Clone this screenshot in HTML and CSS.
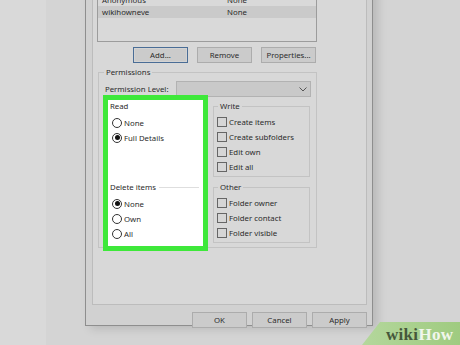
FILE: index.html
```html
<!DOCTYPE html>
<html lang="en">
<head>
    <meta charset="UTF-8">
    <meta name="viewport" content="width=device-width, initial-scale=1.0">
    <title>Permissions</title>
    <link rel="stylesheet" href="styles.css">
</head>
<body>

<div class="screen">
    <div class="strip"></div>

    <div class="dialog">
        <div class="panel">
            <div class="listbox">
                <div class="row"><span class="name">Anonymous</span><span class="level">None</span></div>
                <div class="row selected"><span class="name">wikihowneve</span><span class="level">None</span></div>
            </div>

            <div class="list-buttons">
                <button class="btn focused">Add...</button>
                <button class="btn">Remove</button>
                <button class="btn">Properties...</button>
            </div>

            <div class="group permissions">
                <div class="group-title">Permissions</div>
                <div class="level-row">
                    <span class="level-label">Permission Level:</span>
                    <div class="combo">
                        <svg width="8" height="5" viewBox="0 0 8 5"><polyline points="0.5,0.5 4,4 7.5,0.5" fill="none" stroke="#555" stroke-width="1"/></svg>
                    </div>
                </div>

                <div class="columns">
                    <div class="highlight">
                        <div class="sub-title">Read</div>
                        <div class="option first"><span class="radio"></span>None</div>
                        <div class="option"><span class="radio on"></span>Full Details</div>

                        <div class="sub-title lined">Delete items</div>
                        <div class="option first"><span class="radio on"></span>None</div>
                        <div class="option"><span class="radio"></span>Own</div>
                        <div class="option"><span class="radio"></span>All</div>
                    </div>

                    <div class="right-col">
                        <div class="group small write">
                            <div class="group-title">Write</div>
                            <div class="option"><span class="check"></span>Create items</div>
                            <div class="option"><span class="check"></span>Create subfolders</div>
                            <div class="option"><span class="check"></span>Edit own</div>
                            <div class="option"><span class="check"></span>Edit all</div>
                        </div>
                        <div class="group small other">
                            <div class="group-title">Other</div>
                            <div class="option"><span class="check"></span>Folder owner</div>
                            <div class="option"><span class="check"></span>Folder contact</div>
                            <div class="option"><span class="check"></span>Folder visible</div>
                        </div>
                    </div>
                </div>
            </div>
        </div>

        <div class="footer">
            <button class="btn">OK</button>
            <button class="btn">Cancel</button>
            <button class="btn">Apply</button>
        </div>
    </div>

    <div class="wikihow"><span class="wiki">wiki</span><span class="how">How</span></div>
</div>

</body>
</html>
```

FILE: styles.css
```css
body {
    margin: 0;
    padding: 0;
    font-family: "Noto Sans", "Open Sans", sans-serif;
    font-size: 7.8px;
    color: #2b2b2b;
    background-color: #d4d4d4;
}
.screen {
    position: relative;
    width: 460px;
    height: 345px;
    overflow: hidden;
    display: flex;
    align-items: flex-start;
    background-color: #d4d4d4;
}
.strip {
    width: 46px;
    height: 345px;
    flex-shrink: 0;
    background-color: #d9d9d9;
}
.dialog {
    box-sizing: border-box;
    margin-left: 39px;
    margin-top: -20px;
    width: 288px;
    height: 346px;
    flex-shrink: 0;
    border: 1px solid #8e8e8e;
    background-color: #d1d1d1;
    padding: 0 5px 0 6px;
    box-shadow: 5px 3px 9px rgba(0,0,0,0.13);
}
.panel {
    box-sizing: border-box;
    height: 315px;
    border: 1px solid #bcbcbc;
    border-top: none;
    background-color: #d8d8d8;
    padding: 0 0 0 4px;
}
.listbox {
    box-sizing: border-box;
    margin-top: 9px;
    width: 220px;
    height: 52px;
    border: 1px solid #9c9c9c;
    background-color: #d9d9d9;
    padding-top: 3px;
}
.row {
    display: flex;
    height: 12px;
    line-height: 12px;
    padding-left: 4px;
}
.row.selected {
    background-color: #cacaca;
}
.row .name {
    width: 125px;
}
.btn {
    box-sizing: border-box;
    height: 16px;
    width: 55px;
    padding: 0;
    border: 1px solid #acacac;
    background-color: #cbcbcb;
    font-family: inherit;
    font-size: 7.8px;
    color: #2b2b2b;
}
.btn.focused {
    border-color: #4a6d96;
    box-shadow: inset 0 0 0 1px #d3d3d3;
}
.list-buttons {
    width: 220px;
    display: flex;
    justify-content: flex-end;
    gap: 9px;
    margin-top: 5px;
    padding-right: 1px;
    box-sizing: border-box;
}
.group {
    box-sizing: border-box;
    border: 1px solid #c3c3c3;
}
.group-title {
    width: fit-content;
    height: 12px;
    line-height: 12px;
    margin-top: -7px;
    padding: 0 2px;
    background-color: #d8d8d8;
}
.permissions {
    margin: 9px 0 0 1px;
    width: 219px;
    height: 176px;
    padding: 0 4px;
}
.permissions > .group-title {
    margin-left: 1px;
}
.level-row {
    display: flex;
    align-items: center;
    margin-top: 3px;
    height: 16px;
}
.level-label {
    width: 71px;
    padding-left: 2px;
}
.combo {
    box-sizing: border-box;
    width: 135px;
    height: 16px;
    border: 1px solid #b2b2b2;
    background-color: #c9c9c9;
    display: flex;
    align-items: center;
    justify-content: flex-end;
    padding-right: 3px;
}
.columns {
    display: flex;
    gap: 5px;
    margin-top: -2px;
    position: relative;
}
.highlight {
    box-sizing: border-box;
    width: 105px;
    height: 156px;
    border: 5px solid #3ee83a;
    background-color: #ffffff;
    padding-left: 2px;
}
.sub-title {
    height: 12px;
    line-height: 12px;
}
.sub-title.lined {
    margin-top: 36px;
    display: flex;
    align-items: center;
    gap: 3px;
}
.sub-title.lined::after {
    content: "";
    flex: 1;
    border-top: 1px solid #dedede;
    margin-right: 4px;
}
.option {
    display: flex;
    align-items: center;
    height: 15px;
}
.option.first {
    margin-top: 3px;
}
.highlight .option.first + .option {
    margin-top: 0;
}
.radio {
    box-sizing: border-box;
    width: 10px;
    height: 10px;
    border: 1px solid #333333;
    border-radius: 50%;
    margin: 0 2px 0 2px;
    background-color: #ffffff;
    display: flex;
    align-items: center;
    justify-content: center;
}
.radio.on::after {
    content: "";
    width: 5px;
    height: 5px;
    border-radius: 50%;
    background-color: #111111;
}
.right-col {
    width: 97px;
}
.small {
    padding-left: 3px;
}
.small .group-title {
    margin-left: 1px;
}
.write {
    margin-top: 11px;
    height: 71px;
}
.write .group-title {
    margin-bottom: 2px;
}
.other {
    margin-top: 10px;
    height: 56px;
}
.other .group-title {
    margin-bottom: 2px;
}
.check {
    box-sizing: border-box;
    width: 10px;
    height: 10px;
    border: 1px solid #666666;
    background-color: #d6d6d6;
    margin-right: 2px;
}
.footer {
    display: flex;
    justify-content: flex-end;
    gap: 5px;
    margin-top: 7px;
}
.wikihow {
    position: absolute;
    right: 0;
    bottom: 0;
    width: 98px;
    height: 23px;
    background: linear-gradient(90deg, #b4d79c, #9fcb80);
    clip-path: polygon(18px 0, 100% 0, 100% 100%, 0 100%);
    font-family: "Liberation Serif", serif;
    font-weight: bold;
    font-size: 17px;
    line-height: 25px;
    padding-left: 24px;
    box-sizing: border-box;
    letter-spacing: 0.3px;
}
.wiki {
    color: #46583b;
}
.how {
    color: #f1f6ec;
}
```
